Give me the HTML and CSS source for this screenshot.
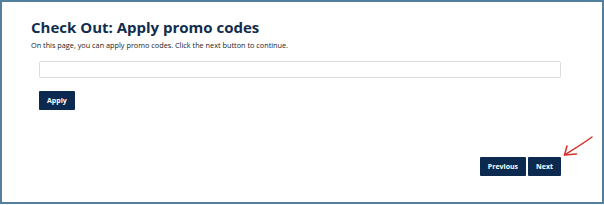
FILE: index.html
```html
<!DOCTYPE html>
<html lang="en">
<head>
  <meta charset="UTF-8" />
  <title>Check Out: Apply promo codes</title>
  <link rel="stylesheet" href="styles.css">
</head>
<body>

  <div class="frame">
    <div class="content">
      <h1>Check Out: Apply promo codes</h1>
      <p class="intro">On this page, you can apply promo codes. Click the next button to continue.</p>

      <div class="promo">
        <input type="text" class="promo-input" />
        <button class="btn">Apply</button>

        <div class="nav">
          <button class="btn">Previous</button>
          <button class="btn">Next</button>
        </div>
      </div>
    </div>

    <!-- hand-drawn pointer to the Next button -->
    <svg class="arrow" width="36" height="28" viewBox="0 0 36 28">
      <path d="M32 5 C24 11 14 17 4.5 23" fill="none" stroke="#d4322c" stroke-width="1.5" stroke-linecap="round" />
      <path d="M7 14 L4.5 23 L16.5 22" fill="none" stroke="#d4322c" stroke-width="1.5" stroke-linecap="round" stroke-linejoin="round" />
    </svg>
  </div>

</body>
</html>
```

FILE: styles.css
```css
body {
  margin: 0;
  padding: 0;
  background: #ffffff;
  font-family: 'Open Sans', sans-serif;
}

.frame {
  position: relative;
  width: 604px;
  height: 204px;
  box-sizing: border-box;
  border: 2px solid #54809f;
  background: #ffffff;
}

.content {
  padding: 16px 33px 0 29px;
}

h1 {
  margin: 0;
  font-size: 15px;
  line-height: 18px;
  font-weight: 700;
  color: #112d4e;
}

.intro {
  margin: 5px 0 0;
  font-size: 7.3px;
  line-height: 9px;
  color: #222;
}

.promo {
  margin: 11px 8px 0;
}

.promo-input {
  display: block;
  width: 100%;
  height: 17px;
  box-sizing: border-box;
  border: 1px solid #dcdcdc;
  border-radius: 2px;
  padding: 0 4px;
  outline: none;
}

.btn {
  display: block;
  height: 19px;
  padding: 0 8px;
  border: none;
  border-radius: 1px;
  background: #0c2a4f;
  color: #ffffff;
  font-family: 'Open Sans', sans-serif;
  font-size: 7px;
  font-weight: 700;
  line-height: 19px;
  cursor: pointer;
}

.promo > .btn {
  margin-top: 13px;
}

.nav {
  display: flex;
  justify-content: flex-end;
  gap: 2px;
  margin-top: 47px;
}

.arrow {
  position: absolute;
  left: 558px;
  top: 130px;
}
```
